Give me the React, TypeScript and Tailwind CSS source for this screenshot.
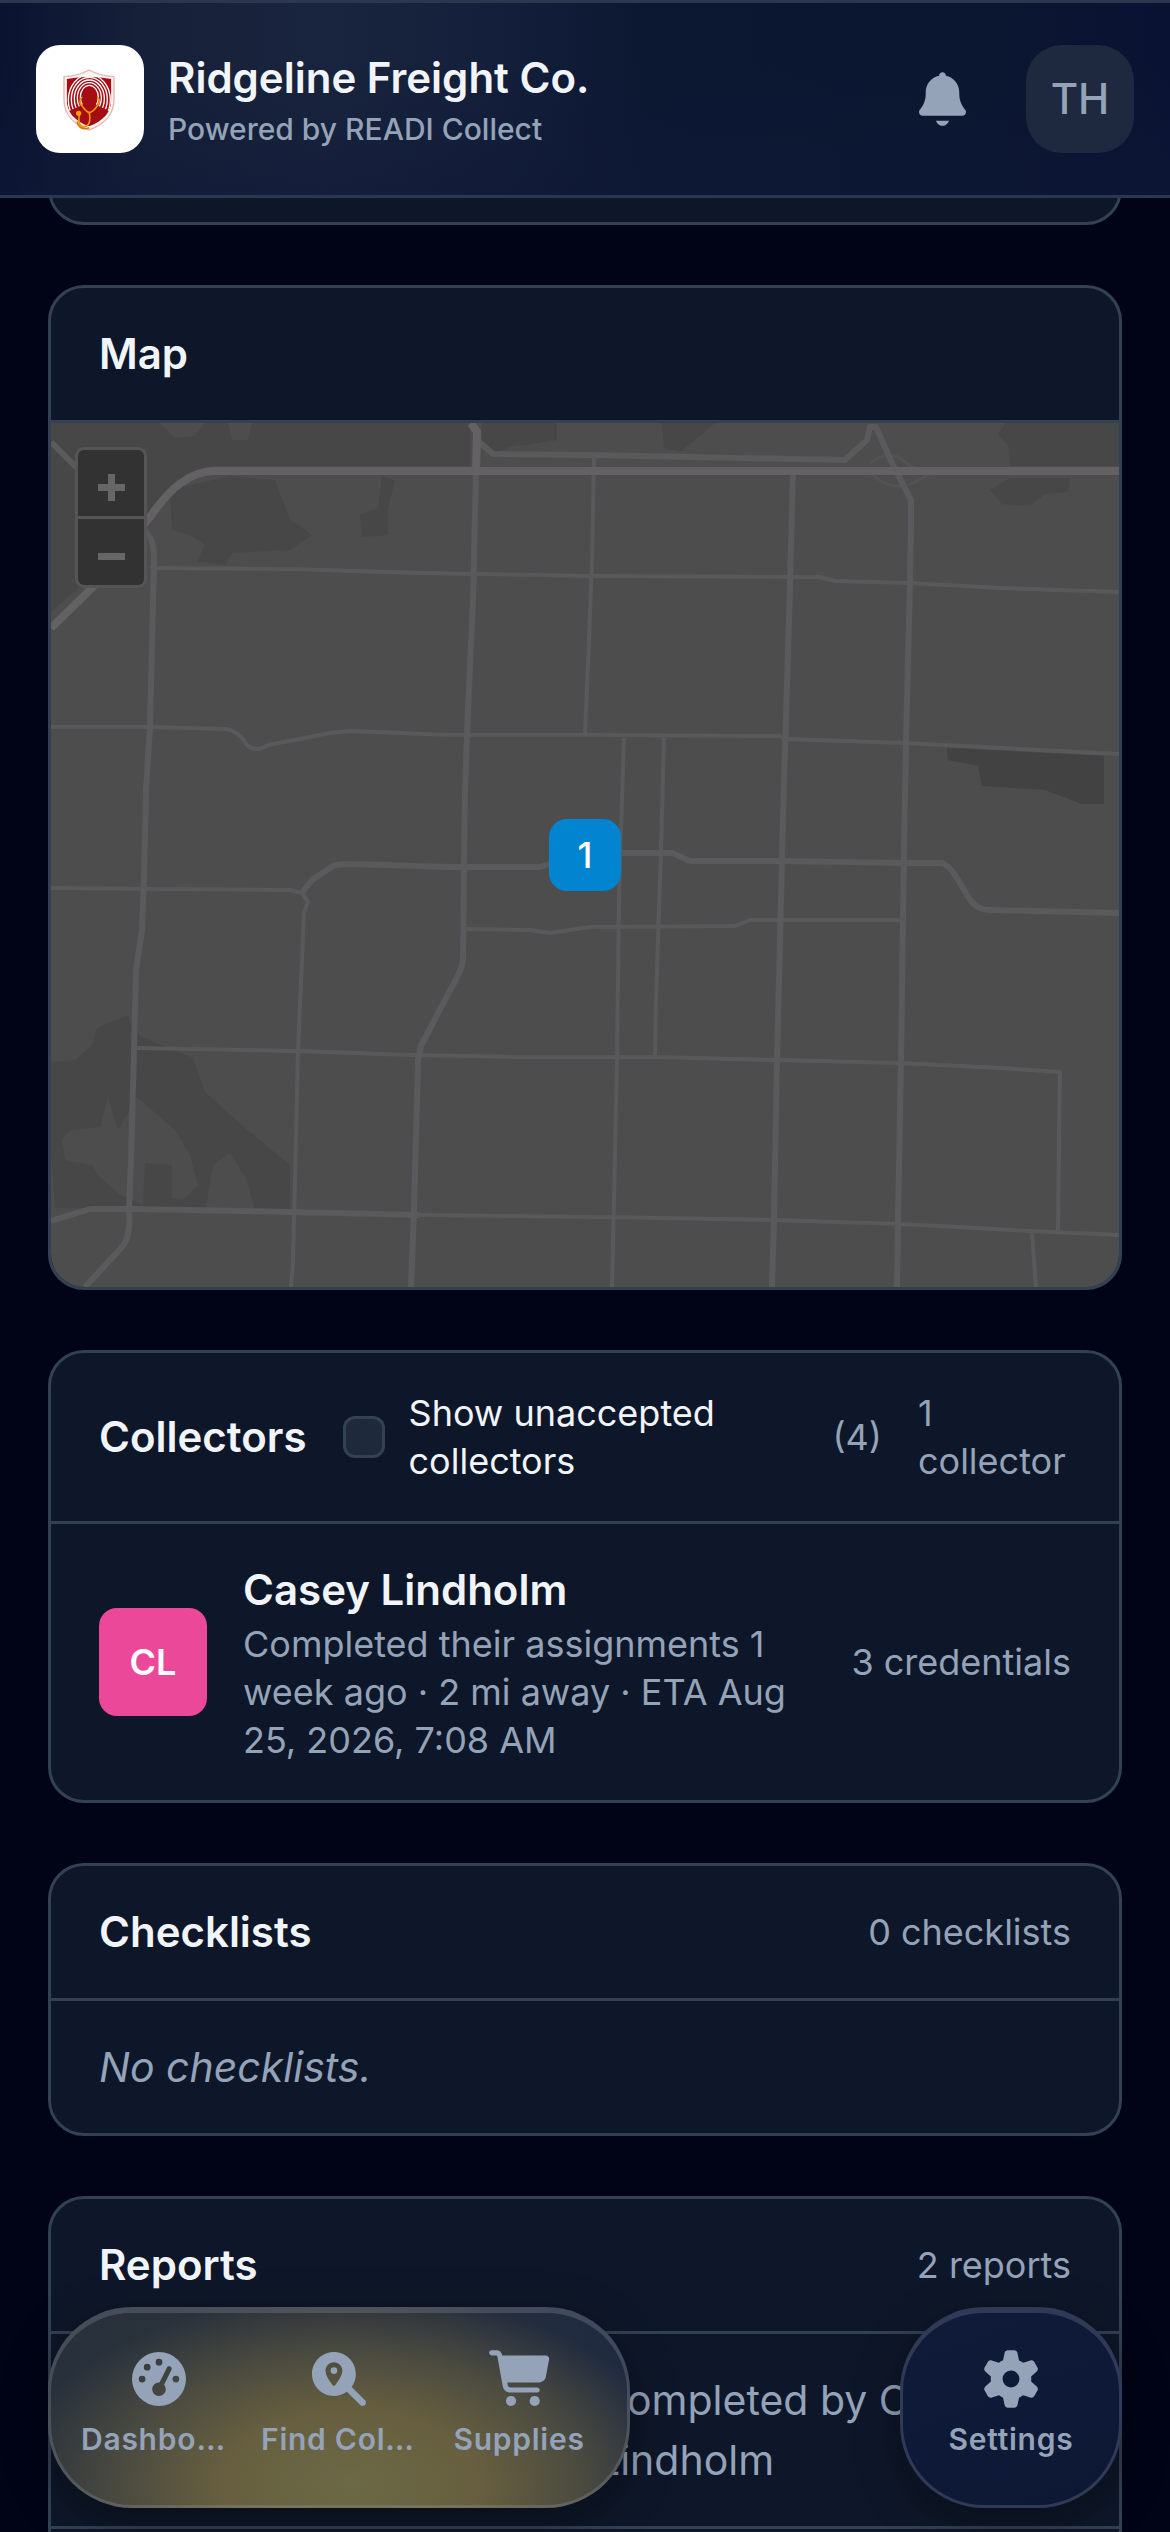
import React from "react";

type IconProps = { className?: string };

const Icon = ({ viewBox, d, className = "" }: { viewBox: string; d: string; className?: string }) => (
  <svg viewBox={viewBox} fill="currentColor" aria-hidden="true" className={`overflow-visible ${className}`}>
    <path d={d} />
  </svg>
);

const BellIcon = ({ className }: IconProps) => (
  <Icon
    className={className}
    viewBox="0 0 448 512"
    d="M224 0c-17.7 0-32 14.3-32 32l0 3.2C119 50 64 114.6 64 192l0 21.7c0 48.1-16.4 94.8-46.4 132.4L7.8 358.3C2.7 364.6 0 372.4 0 380.5 0 400.1 15.9 416 35.5 416l376.9 0c19.6 0 35.5-15.9 35.5-35.5 0-8.1-2.7-15.9-7.8-22.2l-9.8-12.2C400.4 308.5 384 261.8 384 213.7l0-21.7c0-77.4-55-142-128-156.8l0-3.2c0-17.7-14.3-32-32-32zM162 464c7.1 27.6 32.2 48 62 48s54.9-20.4 62-48l-124 0z"
  />
);

const GaugeIcon = ({ className }: IconProps) => (
  <Icon
    className={className}
    viewBox="0 0 512 512"
    d="M0 256a256 256 0 1 1 512 0 256 256 0 1 1 -512 0zM288 96a32 32 0 1 0 -64 0 32 32 0 1 0 64 0zM256 416c35.3 0 64-28.7 64-64 0-16.2-6-31.1-16-42.3l69.5-138.9c5.9-11.9 1.1-26.3-10.7-32.2s-26.3-1.1-32.2 10.7L261.1 288.2c-1.7-.1-3.4-.2-5.1-.2-35.3 0-64 28.7-64 64s28.7 64 64 64zM176 144a32 32 0 1 0 -64 0 32 32 0 1 0 64 0zM96 288a32 32 0 1 0 0-64 32 32 0 1 0 0 64zm352-32a32 32 0 1 0 -64 0 32 32 0 1 0 64 0z"
  />
);

const FindIcon = ({ className }: IconProps) => (
  <Icon
    className={className}
    viewBox="0 0 512 512"
    d="M416 208c0 45.9-14.9 88.3-40 122.7L502.6 457.4c12.5 12.5 12.5 32.8 0 45.3s-32.8 12.5-45.3 0L330.7 376c-34.4 25.2-76.8 40-122.7 40C93.1 416 0 322.9 0 208S93.1 0 208 0S416 93.1 416 208zM288 176c0-44.2-35.8-80-80-80s-80 35.8-80 80c0 48.8 46.5 111.6 68.6 138.6c6 7.3 16.8 7.3 22.7 0c22.1-27 68.6-89.8 68.6-138.6zM208 144a32 32 0 1 1 0 64 32 32 0 1 1 0-64z"
  />
);

const CartIcon = ({ className }: IconProps) => (
  <Icon
    className={className}
    viewBox="0 0 576 512"
    d="M24-16C10.7-16 0-5.3 0 8S10.7 32 24 32l45.3 0c3.9 0 7.2 2.8 7.9 6.6l52.1 286.3c6.2 34.2 36 59.1 70.8 59.1L456 384c13.3 0 24-10.7 24-24s-10.7-24-24-24l-255.9 0c-11.6 0-21.5-8.3-23.6-19.7l-5.1-28.3 303.6 0c30.8 0 57.2-21.9 62.9-52.2L568.9 69.9C572.6 50.2 557.5 32 537.4 32l-412.7 0-.4-2c-4.8-26.6-28-46-55.1-46L24-16zM208 512a48 48 0 1 0 0-96 48 48 0 1 0 0 96zm224 0a48 48 0 1 0 0-96 48 48 0 1 0 0 96z"
  />
);

const GearIcon = ({ className }: IconProps) => (
  <Icon
    className={className}
    viewBox="0 0 512 512"
    d="M195.1 9.5C198.1-5.3 211.2-16 226.4-16l59.8 0c15.2 0 28.3 10.7 31.3 25.5L332 79.5c14.1 6 27.3 13.7 39.3 22.8l67.8-22.5c14.4-4.8 30.2 1.2 37.8 14.4l29.9 51.8c7.6 13.2 4.9 29.8-6.5 39.9L447 233.3c.9 7.4 1.3 15 1.3 22.7s-.5 15.3-1.3 22.7l53.4 47.5c11.4 10.1 14 26.8 6.5 39.9l-29.9 51.8c-7.6 13.1-23.4 19.2-37.8 14.4l-67.8-22.5c-12.1 9.1-25.3 16.7-39.3 22.8l-14.4 69.9c-3.1 14.9-16.2 25.5-31.3 25.5l-59.8 0c-15.2 0-28.3-10.7-31.3-25.5l-14.4-69.9c-14.1-6-27.2-13.7-39.3-22.8L73.5 432.3c-14.4 4.8-30.2-1.2-37.8-14.4L5.8 366.1c-7.6-13.2-4.9-29.8 6.5-39.9l53.4-47.5c-.9-7.4-1.3-15-1.3-22.7s.5-15.3 1.3-22.7L12.3 185.8c-11.4-10.1-14-26.8-6.5-39.9L35.7 94.1c7.6-13.2 23.4-19.2 37.8-14.4l67.8 22.5c12.1-9.1 25.3-16.7 39.3-22.8L195.1 9.5zM256.3 336a80 80 0 1 0 -.6-160 80 80 0 1 0 .6 160z"
  />
);

const SHIELD = "M105 30 C126 42 152 48 180 50 V118 C180 162 152 194 105 210 C58 194 30 162 30 118 V50 C58 48 84 42 105 30Z";
const SHIELD_INNER = "M105 42 C126 50 150 55 172 57 V118 C172 156 148 184 105 199 C62 184 38 156 38 118 V57 C60 55 84 50 105 42Z";

const Logo = () => (
  <svg viewBox="0 0 216 234" className="h-[78px] w-[72px]" role="img" aria-label="Company logo">
    <defs>
      <clipPath id="shield">
        <path d={SHIELD_INNER} />
      </clipPath>
    </defs>
    <path d={SHIELD} fill="#fdf3f1" stroke="#e6b5ac" strokeWidth="4" strokeLinejoin="round" />
    <g clipPath="url(#shield)">
      <path d="M30 52 H180 V170 H30Z" fill="#a50d14" />
      <g fill="none" stroke="#fff" strokeWidth="4">
        <ellipse cx="106" cy="112" rx="27" ry="36" />
        <ellipse cx="106" cy="114" rx="36" ry="46" />
        <ellipse cx="106" cy="116" rx="45" ry="56" />
        <ellipse cx="106" cy="118" rx="54" ry="66" />
        <ellipse cx="106" cy="120" rx="63" ry="76" />
      </g>
      <path
        d="M30 166 C50 146 74 144 90 130 L86 110 C84 90 92 80 106 80 C120 80 128 90 126 110 L122 130 C138 144 160 146 180 166 V215 H30Z"
        fill="#a50d14"
      />
    </g>
    <g fill="none" stroke="#f0940d" strokeWidth="5" strokeLinecap="round">
      <path d="M83 112 C74 120 78 134 86 140 C92 148 98 156 106 158 C115 156 122 148 128 140 C136 134 140 120 131 112" />
      <path d="M106 158 C110 180 106 196 94 200 C78 202 72 190 76 162" />
      <path d="M70 186 C72 202 86 210 104 204" stroke="#d97706" />
    </g>
    <circle cx="74" cy="160" r="8" fill="#f59e0b" />
  </svg>
);

const wideRoads = [
  "M51 628 L92 588 L150 517 C170 488 190 471 215 471 H1119",
  "M471 423 L477 432 L476 470",
];

const midRoads = [
  "M51 442 L77 468 L138 520 L148 535 Q154 540 154 560 L150 727 L146 790 L144 880 L142 930 L136 970 L134 1050 L131 1160 L129 1210 Q131 1237 122 1247 L85 1287",
  "M476 470 L473 600 L468 710 L465 790 L464 866 L463 960 C462 972 450 990 446 998 L421 1046 L418 1060 L417 1100 L414 1210 L411 1287",
  "M477 440 L493 454 L590 455 L795 459 L845 460 L867 440 L870 427 H876 L893 465 L911 500 V530 L910 582 L906 740 L904 850 L901 1060 L898 1220 L897 1287",
  "M793 472 L789 620 L784 780 L781 900 L777 1060 L774 1220 L772 1287",
  "M302 893 L312 880 L333 866 Q338 864 350 864 L450 867 H540 L552 863 L622 853 H672 L690 861 H780 L905 863 L942 863 Q948 865 955 875 L969 898 Q976 910 990 910 L1119 913",
  "M51 1221 L90 1209 H130 L290 1212 L420 1215",
];

const thinRoads = [
  "M150 568 L290 569 L420 573 L590 576 L820 577 L835 581 L910 583 L1000 588 L1119 592",
  "M51 727 H150 L225 729 Q238 730 247 745 Q256 753 268 745 L330 733 L350 731 L450 735 L590 735 L780 736 L785 739 L905 743 L1119 754",
  "M594 457 L592 560 L589 640 L585 735",
  "M624 738 L621 830 L619 900 L617 1060 L614 1200 L612 1287",
  "M664 738 L661 850 L659 910 L656 1000 L655 1057",
  "M51 888 L290 890 L302 893 L308 902 L304 912 L302 960 L298 1050 L295 1180 L293 1260 L291 1287",
  "M464 929 L530 930 L550 933 L590 927 L735 926 L750 920 H901",
  "M137 1048 L298 1051 L410 1055 L520 1057 H655 L777 1060 L900 1063 L1000 1068 L1060 1072 L1059 1140 L1058 1231",
  "M420 1215 L600 1217 L774 1220 L900 1224 L1030 1231 L1119 1235",
  "M1032 1232 L1036 1287",
];

const landPatches = [
  "M51 423 H160 L175 438 L195 436 L205 423 H228 L232 440 H248 L252 423 H470 V466 H215 C190 468 170 490 150 512 L88 580 L51 612Z",
  "M482 423 H557 V440 L510 447 L495 453 L482 440Z",
  "M170 490 L172 530 L190 535 L205 545 L197 562 L225 565 L232 553 L290 550 L312 535 L290 520 L275 480 L230 476Z",
  "M382 476 L395 480 L388 508 V535 L362 537 L360 515 L378 508Z",
  "M662 423 H715 L695 440 L680 452 L664 448Z",
  "M1005 423 H1119 V466 H1010 L1008 445 L998 435Z",
  "M990 490 L1010 478 H1070 L1068 492 L1045 494 L1030 506 L1002 504Z",
  "M51 1062 L75 1060 L92 1045 L97 1028 L127 1015 L140 1036 L193 1058 L205 1092 L245 1128 L290 1165 V1212 H255 L247 1180 L230 1153 L213 1165 L206 1208 H55 L51 1150Z M62 1140 L70 1130 L100 1127 L108 1098 L118 1130 L137 1097 L175 1130 L190 1155 L198 1185 L185 1198 H172 V1165 L145 1163 L143 1205 L120 1195 L98 1175 L92 1165 L65 1160Z",
];

const MapDrawing = () => (
  <svg viewBox="51 423 1068 864" preserveAspectRatio="xMidYMid slice" className="block w-full" aria-hidden="true">
    <rect x="51" y="423" width="1068" height="864" fill="#4d4d4e" />
    <g fill="#474748" fillRule="evenodd">
      {landPatches.map((d) => (
        <path key={d} d={d} />
      ))}
    </g>
    <path d="M947 748 L1104 756 V804 H1082 L1045 790 L982 786 L978 766 L948 760Z" fill="#424243" />
    <g fill="none" strokeLinejoin="round">
      <g stroke="#59595b" strokeWidth="4">
        {thinRoads.map((d) => (
          <path key={d} d={d} />
        ))}
      </g>
      <g stroke="#535354" strokeWidth="3">
        <path d="M870 463 Q892 448 905 462 Q915 470 935 476" />
        <path d="M868 470 Q890 494 915 482 L930 474" />
      </g>
      <g stroke="#5a5a5c" strokeWidth="6">
        {midRoads.map((d) => (
          <path key={d} d={d} />
        ))}
      </g>
      <g stroke="#636163" strokeWidth="8">
        {wideRoads.map((d) => (
          <path key={d} d={d} />
        ))}
      </g>
    </g>
  </svg>
);

const Card = ({ children }: { children: React.ReactNode }) => (
  <section className="shrink-0 overflow-hidden rounded-[36px] border-[3px] border-[#334155] bg-[#0e1729]">
    {children}
  </section>
);

const CardHeader = ({ title, children }: { title: string; children?: React.ReactNode }) => (
  <header className="flex items-center gap-9 border-b-[3px] border-[#334155] px-12 py-9">
    <h2 className="text-[42px] leading-[60px] font-semibold text-slate-100">{title}</h2>
    {children}
  </header>
);

const zoomButton = "flex size-[66px] items-center justify-center bg-[#323232]";
const navItem = "flex flex-col items-center gap-3 text-[#94a3b8]";
const navLabel = "w-full truncate text-center text-[30px] leading-[42px] font-semibold tracking-wide";

export default function App() {
  return (
    <div className="relative flex h-screen flex-col overflow-hidden bg-[#010416] font-[Inter,sans-serif] text-[36px] leading-[48px] text-[#94a3b8]">
      <header className="z-10 flex shrink-0 items-center border-y-[3px] border-[#2b364f] bg-[linear-gradient(to_bottom,transparent_30%,#0e183680),linear-gradient(to_right,#0a1330,#162039_12%,#19243e_28%,#141f3b_42%,#0c1832_55%,#0b1731_85%,#0a1233)] px-9 py-[42px]">
        <div className="flex size-[108px] shrink-0 items-center justify-center rounded-[24px] bg-white">
          <Logo />
        </div>
        <div className="ml-6 flex-1">
          <h1 className="text-[42px] leading-[60px] font-semibold text-slate-100">Ridgeline Freight Co.</h1>
          <p className="text-[30px] leading-[42px] font-medium">Powered by READI Collect</p>
        </div>
        <button aria-label="Notifications" className="flex size-[108px] items-center justify-center">
          <BellIcon className="h-[54px] w-[47px]" />
        </button>
        <button className="ml-[30px] size-[108px] rounded-[36px] bg-[#1e293f] text-[42px] font-medium">TH</button>
      </header>

      <main className="flex min-h-0 flex-1 flex-col gap-[60px] overflow-hidden px-12">
        <section className="-mt-[33px] h-[60px] shrink-0 rounded-[36px] rounded-t-none border-[3px] border-[#334155] bg-[#0e1729]" />

        <Card>
          <CardHeader title="Map" />
          <div className="relative">
            <MapDrawing />
            <div className="absolute top-6 left-6 flex flex-col gap-[3px] overflow-hidden rounded-[9px] border-[3px] border-[#555556] bg-[#555556]">
              <button aria-label="Zoom in" className={zoomButton}>
                <svg viewBox="0 0 27 27" className="mt-2 size-[27px]" fill="#666667">
                  <path d="M10 0h7v10h10v7H17v10h-7V17H0v-7h10z" />
                </svg>
              </button>
              <button aria-label="Zoom out" className={zoomButton}>
                <svg viewBox="0 0 27 27" className="mt-2 size-[27px]" fill="#666667">
                  <path d="M0 10h27v7H0z" />
                </svg>
              </button>
            </div>
            <button className="absolute top-1/2 left-1/2 size-[72px] -translate-1/2 rounded-[18px] bg-[#0284d1] font-medium text-white">
              1
            </button>
          </div>
        </Card>

        <Card>
          <CardHeader title="Collectors">
            <div className="flex flex-1 items-center gap-6">
              <input
                id="unaccepted"
                type="checkbox"
                className="size-[42px] shrink-0 appearance-none rounded-[12px] border-[3px] border-[#334155] bg-[#1e293b] checked:bg-[#0284d1]"
              />
              <label htmlFor="unaccepted" className="text-slate-100">
                Show unaccepted collectors
              </label>
            </div>
            <span>(4)</span>
            <span className="w-[153px]">1 collector</span>
          </CardHeader>
          <div className="flex items-center gap-9 px-12 py-9">
            <div className="flex size-[108px] shrink-0 items-center justify-center rounded-[18px] bg-[#ec4899] font-semibold text-white">
              CL
            </div>
            <div className="flex-1">
              <h3 className="text-[42px] leading-[60px] font-semibold text-slate-100">Casey Lindholm</h3>
              <p>Completed their assignments 1 week ago · 2 mi away · ETA Aug 25, 2026, 7:08 AM</p>
            </div>
            <span className="shrink-0">3 credentials</span>
          </div>
        </Card>

        <Card>
          <CardHeader title="Checklists">
            <span className="ml-auto">0 checklists</span>
          </CardHeader>
          <p className="px-12 py-9 text-[41px] leading-[60px] italic">No checklists.</p>
        </Card>

        <Card>
          <CardHeader title="Reports">
            <span className="ml-auto">2 reports</span>
          </CardHeader>
          <div className="border-b-[3px] border-[#334155] py-9 pr-12 pl-[546px]">
            <p className="text-[41px] leading-[60px]">Completed by Casey Lindholm</p>
          </div>
          <div className="h-[192px]" />
        </Card>
      </main>

      <nav className="absolute inset-x-0 bottom-6 z-10 flex justify-between px-12">
        <div className="flex gap-6 rounded-[84px] border-[3px] border-t-[6px] border-[#a3a3b040] bg-[radial-gradient(ellipse_58%_95%_at_52%_88%,#6b6946_0%,#675f3f_38%,#4b4b40_68%,transparent_100%),linear-gradient(to_right,#28313b,#2c323c_50%,#1f2a40)] bg-origin-border px-[30px] pt-[39px] pb-[45px] shadow-[0_12px_45px_#00000060]">
          <a href="#dashboard" className={`${navItem} w-[156px]`}>
            <GaugeIcon className="size-[54px]" />
            <span className={navLabel}>Dashboard</span>
          </a>
          <a href="#find" className={`${navItem} w-[156px]`}>
            <FindIcon className="size-[54px]" />
            <span className={navLabel}>Find Collectors</span>
          </a>
          <a href="#supplies" className={`${navItem} w-[156px]`}>
            <CartIcon className="h-[54px] w-[61px]" />
            <span className={navLabel}>Supplies</span>
          </a>
        </div>
        <div className="flex rounded-[84px] border-[3px] border-t-[6px] border-[#2f3a56] bg-[linear-gradient(160deg,#101b3b,#0c1833)] px-[30px] pt-[39px] pb-[45px] shadow-[0_12px_45px_#00000060]">
          <a href="#settings" className={`${navItem} w-[156px]`}>
            <GearIcon className="size-[54px]" />
            <span className={navLabel}>Settings</span>
          </a>
        </div>
      </nav>
    </div>
  );
}
